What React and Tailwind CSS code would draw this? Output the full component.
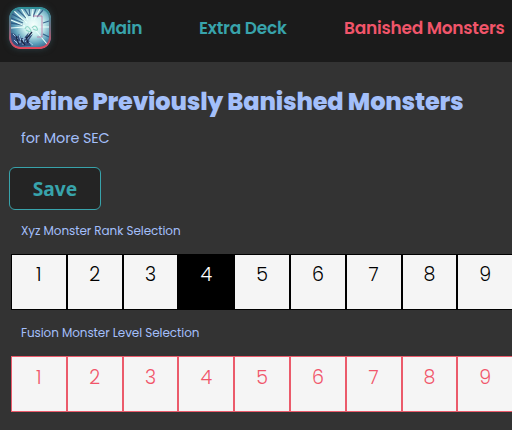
function Logo() {
  return (
    <svg viewBox="0 0 42 42" className="h-[42px] w-[42px] rounded-[11px] shadow-[0_0_6px_#2c4248]">
      <defs>
        <radialGradient id="burst" cx="0.58" cy="0.42" r="0.65">
          <stop offset="0" stopColor="#f6fffd" />
          <stop offset="0.38" stopColor="#c9eeee" />
          <stop offset="0.7" stopColor="#5d9fba" />
          <stop offset="1" stopColor="#2b4a78" />
        </radialGradient>
        <linearGradient id="frame" x1="0" y1="0" x2="0" y2="1">
          <stop offset="0" stopColor="#2f9098" />
          <stop offset="0.55" stopColor="#7a6a80" />
          <stop offset="1" stopColor="#e0485c" />
        </linearGradient>
      </defs>
      <rect width="42" height="42" rx="11" fill="url(#burst)" />
      <g stroke="#234f7c" strokeWidth="1.3" opacity="0.8">
        <path d="M3 7l13 7M8 2l9 9M15 1l5 8M2 16l12 2M27 2l-3 8M34 3l-6 7M40 14l-6 2M40 30l-6-3M2 11l12 5M20 1l1 8" />
      </g>
      <g stroke="#eafffb" strokeWidth="1.1">
        <path d="M5 4l13 12M12 1l7 12M2 13l14 6M24 1l-1 12M31 2l-6 11M41 20l-12 0M38 37l-11-13M2 21l14-1" />
      </g>
      <path d="M24 9h9v21h-5" fill="none" stroke="#c07aa8" strokeWidth="0.9" />
      <path d="M16 22q2-5 5 0t-4 1M23 21q3-4 5 0t-4 1" fill="none" stroke="#8ed5c5" strokeWidth="1.1" />
      <path d="M2 26l4 1 2 3 2-3 2 4 3 0 5-6-2 6 6-4-4 6 2 6H6l-4-6z" fill="#34507f" />
      <path d="M4 27l5 5M10 28l2 6M15 30l-1 8M20 30l-4 5M5 33l5 5M20 35l4 3M7 35h5M13 33l4-2" stroke="#a0c6e2" strokeWidth="1" />
      <path d="M7 29l3 9M17 30l2 6M12 33l4 5M23 25l-5 6" stroke="#1b2646" strokeWidth="1.3" />
      <rect x="1" y="1" width="40" height="40" rx="10.5" fill="none" stroke="url(#frame)" strokeWidth="2" />
    </svg>
  );
}

const levels = [1, 2, 3, 4, 5, 6, 7, 8, 9];

function LevelRow({ selected, cell }) {
  return (
    <div className="ml-[11px] flex">
      {levels.map((n) => (
        <div
          key={n}
          className={`flex h-14 w-[55.8px] shrink-0 justify-center border text-[19px] leading-7 font-light ${
            n === selected ? "border-black bg-black pt-[6px] text-white" : cell
          }`}
        >
          {n}
        </div>
      ))}
    </div>
  );
}

export default function App() {
  return (
    <div className="h-[430px] w-[512px] overflow-hidden bg-[#333333] font-[Poppins,Inter,sans-serif] text-[#a3bffa]">
      <header className="flex h-[62px] bg-[#1b1b1b] pt-[7px] pl-[9px] text-[17px] leading-[43px] font-semibold tracking-[-0.25px] whitespace-nowrap text-[#38a3ab]">
        <Logo />
        <nav className="flex">
          <a className="ml-[49.5px] w-[98.5px]">Main</a>
          <a className="w-[145px]">Extra Deck</a>
          <a className="text-[#f1556a]">Banished Monsters</a>
        </nav>
      </header>
      <main className="whitespace-nowrap">
        <h1 className="mt-[24px] ml-[9px] text-[24px] leading-8 font-extrabold tracking-[-0.17px]">Define Previously Banished Monsters</h1>
        <p className="mt-[8px] ml-[21px] text-[14.4px] leading-6 tracking-[-0.1px]">for More SEC</p>
        <button className="mt-[17px] ml-[9px] block h-[43px] w-[92px] rounded-md border border-[#38a3ab] bg-[#242424] pt-[2px] font-['Noto_Sans',sans-serif] text-[19.2px] font-bold text-[#38a3ab]">
          Save
        </button>
        <h2 className="mt-[11px] ml-[21px] text-[12px] leading-5 tracking-[-0.08px]">Xyz Monster Rank Selection</h2>
        <div className="mt-[13px]">
          <LevelRow selected={4} cell="border-black bg-[#f5f5f5] pt-[6px] text-black" />
        </div>
        <h2 className="mt-[13px] ml-[21px] text-[12px] leading-5 tracking-[-0.08px]">Fusion Monster Level Selection</h2>
        <div className="mt-[13px]">
          <LevelRow cell="border-[#eb5b6b] bg-[#f5f5f5] pt-[7px] text-[#f1556a]" />
        </div>
      </main>
    </div>
  );
}
